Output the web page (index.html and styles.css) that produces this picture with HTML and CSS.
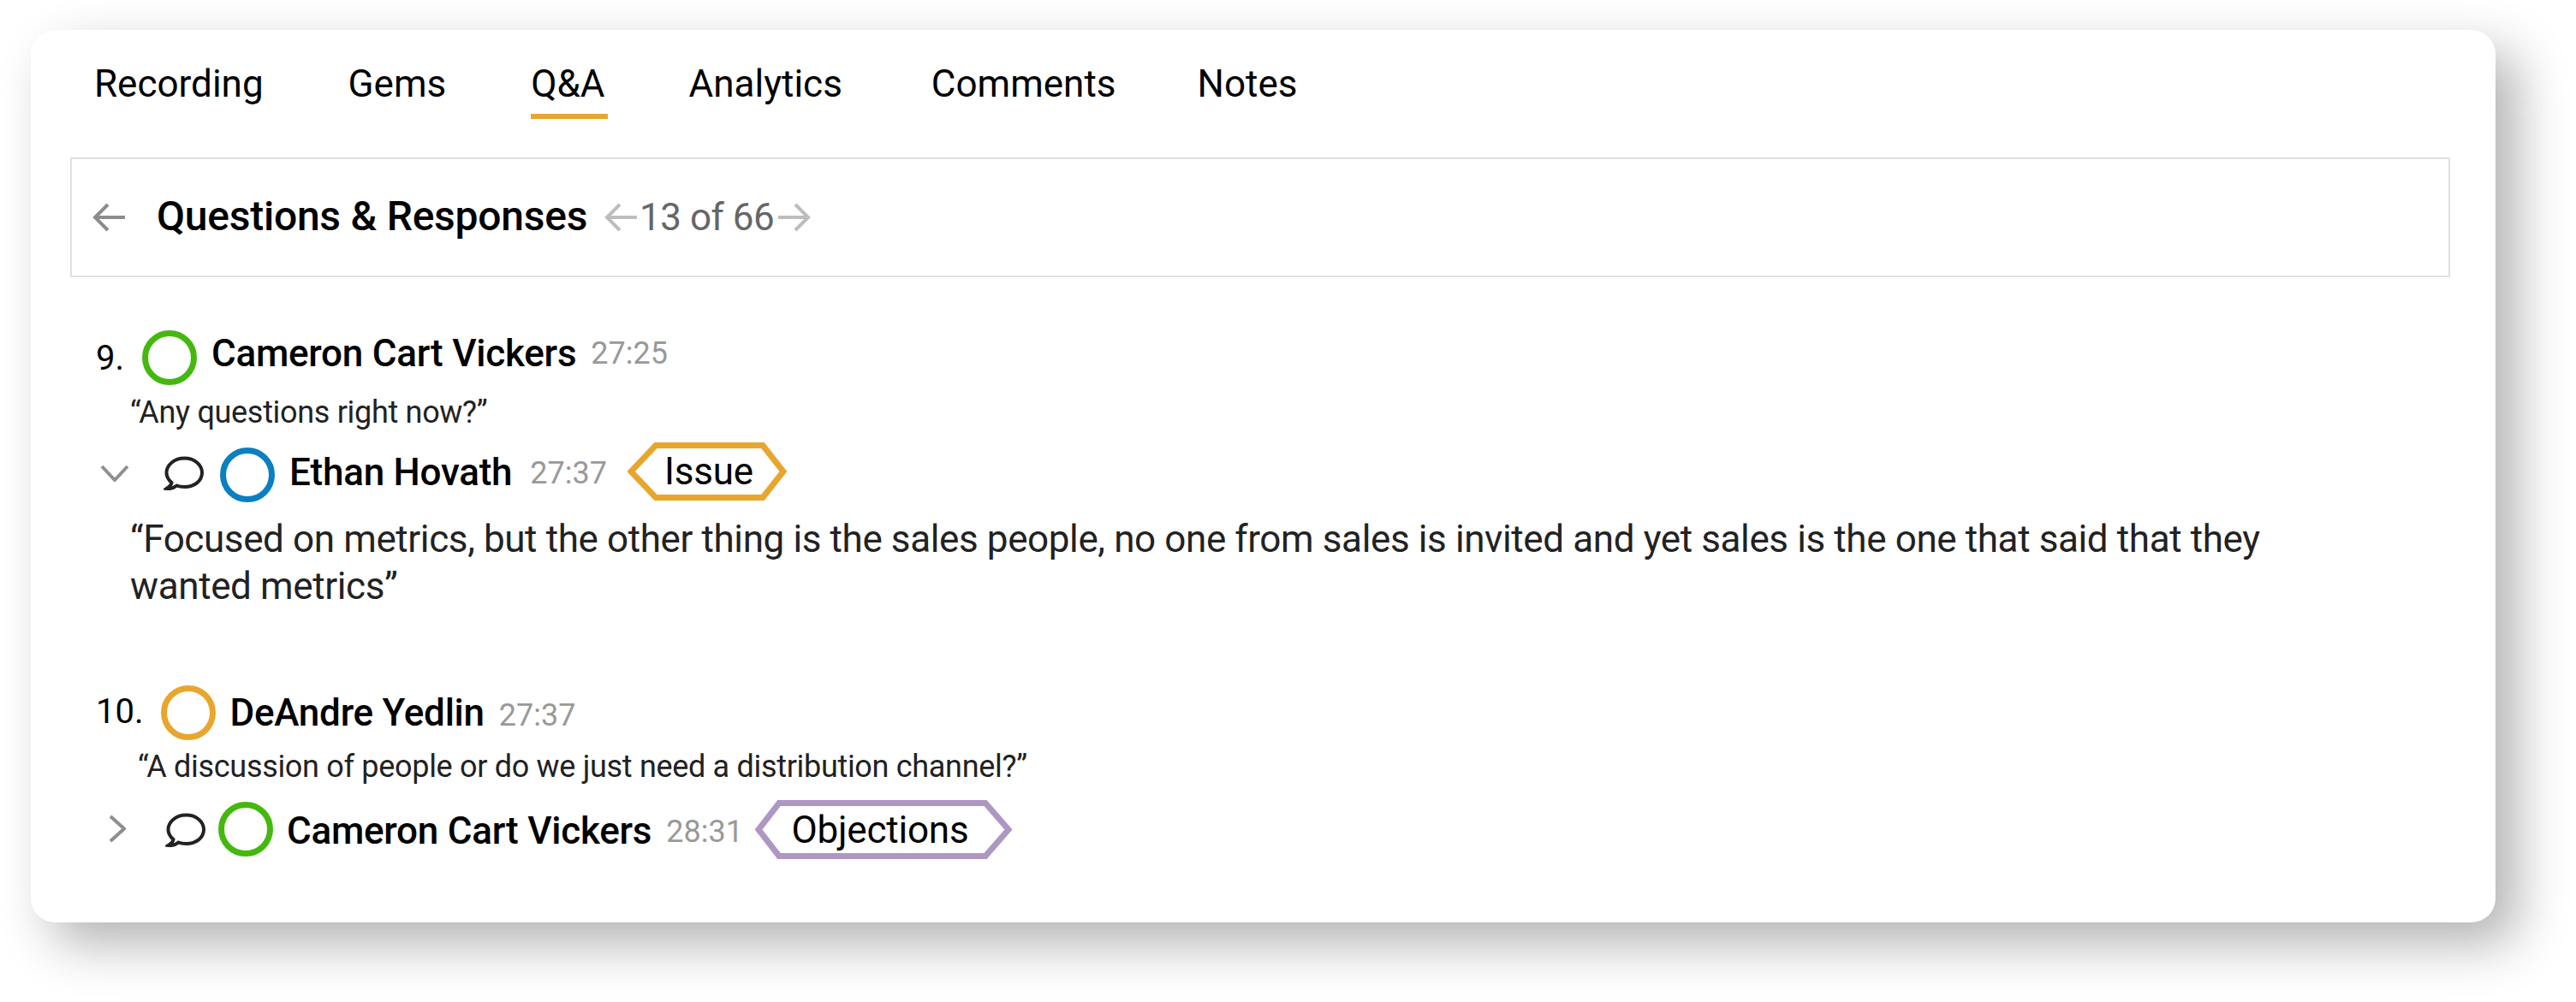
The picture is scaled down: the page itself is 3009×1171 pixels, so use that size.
FILE: index.html
```html
<!DOCTYPE html>
<html lang="en">
<head>
<meta charset="utf-8">
<title>Questions &amp; Responses</title>
<link rel="stylesheet" href="styles.css">
</head>
<body>
<main class="card">
  <nav class="tabs">
    <span class="tab tab-recording">Recording</span>
    <span class="tab tab-gems">Gems</span>
    <span class="tab tab-qa active">Q&amp;A</span>
    <span class="tab tab-analytics">Analytics</span>
    <span class="tab tab-comments">Comments</span>
    <span class="tab">Notes</span>
  </nav>
  <header class="panel">
    <svg class="arrow arrow-back" viewBox="0 0 40 34"><path d="M38 17H3M18 2 3 17l15 15"/></svg>
    <h1 class="title">Questions &amp; Responses</h1>
    <svg class="arrow arrow-pager" viewBox="0 0 40 34"><path d="M38 17H3M18 2 3 17l15 15"/></svg>
    <span class="count">13 of 66</span>
    <svg class="arrow arrow-pager" viewBox="0 0 40 34"><path d="M2 17h35M22 2l15 15-15 15"/></svg>
  </header>

  <section class="row q-one">
    <span class="num">9.</span>
    <span class="avatar green"></span>
    <span class="name">Cameron Cart Vickers</span>
    <span class="time">27:25</span>
  </section>
  <p class="quote quote-one">“Any questions right now?”</p>
  <section class="row reply reply-open">
    <span class="toggle toggle-open"><svg class="chev-down" viewBox="0 0 34 20"><path d="M2 2l15 16L32 2"/></svg></span>
    <svg class="bubble" viewBox="0 0 47 40"><path d="M9.500 31C6 28 3.500 24 3.500 19.500 3.500 10 13 2.500 24.500 2.500S45 10 45 19.500 36 36 24.500 36c-3.500 0-6.500-.5-9-1.500C12.500 37 8 38.500 3.500 38 6.500 36 9.500 34 9.500 31Z"/></svg>
    <span class="avatar blue"></span>
    <span class="name">Ethan Hovath</span>
    <span class="time">27:37</span>
    <span class="tag tag-issue">
      <svg class="tag-shape" viewBox="0 0 186 68"><polygon class="stroke-orange" points="33,3.500 158,3.500 182,34 158,64.500 33,64.500 4,34"/></svg>
      <span class="tag-text">Issue</span>
    </span>
  </section>
  <p class="answer">“Focused on metrics, but the other thing is the sales people, no one from sales is invited and yet sales is the one that said that they wanted metrics”</p>

  <section class="row q-two">
    <span class="num">10.</span>
    <span class="avatar orange"></span>
    <span class="name">DeAndre Yedlin</span>
    <span class="time">27:37</span>
  </section>
  <p class="quote quote-two">“A discussion of people or do we just need a distribution channel?”</p>
  <section class="row reply reply-closed">
    <span class="toggle toggle-closed"><svg class="chev-right" viewBox="0 0 20 33"><path d="M2 2l16 14.500L2 31"/></svg></span>
    <svg class="bubble" viewBox="0 0 47 40"><path d="M9.500 31C6 28 3.500 24 3.500 19.500 3.500 10 13 2.500 24.500 2.500S45 10 45 19.500 36 36 24.500 36c-3.500 0-6.500-.5-9-1.500C12.500 37 8 38.500 3.500 38 6.500 36 9.500 34 9.500 31Z"/></svg>
    <span class="avatar green"></span>
    <span class="name">Cameron Cart Vickers</span>
    <span class="time">28:31</span>
    <span class="tag tag-objections">
      <svg class="tag-shape" viewBox="0 0 300 69"><polygon class="stroke-purple" points="28,3.500 269,3.500 296,34.500 269,65.500 28,65.500 4,34.500"/></svg>
      <span class="tag-text">Objections</span>
    </span>
  </section>
</main>
</body>
</html>
```
FILE: styles.css
```css
* { box-sizing: border-box; }
html, body { margin: 0; padding: 0; background: #fff; }
body { width: 3009px; height: 1171px; overflow: hidden; font-family: Roboto, "Liberation Sans", sans-serif; color: #000; }

.card {
  width: 2879px;
  height: 1043px;
  margin: 35px 0 0 36px;
  padding: 0 53px 0 46px;
  background: #fff;
  border-radius: 28px;
  box-shadow: 25px 25px 60px rgba(0, 0, 0, .3);
}

.tabs { display: flex; padding: 37px 0 0 28px; height: 104px; }
.tab { font-size: 44px; line-height: 52px; height: 67px; }
.tab-recording { margin-right: 99px; }
.tab-gems { margin-right: 99px; }
.tab-qa { margin-right: 95px; padding-right: 3px; }
.tab-analytics { margin-right: 104px; }
.tab-comments { margin-right: 95px; }
.tab.active { border-bottom: 6px solid #e8a62e; }

.panel {
  display: flex;
  align-items: center;
  height: 140px;
  margin-top: 45px;
  padding-left: 24px;
  border: 2px solid #e0e0e0;
}
.arrow { fill: none; stroke-width: 4px; flex: none; width: 40px; height: 34px; }
.arrow path { fill: none; }
.arrow-back path { stroke: #8c8c8c; }
.arrow-pager path { stroke: #bdbdbd; }
.arrow-back { margin-right: 35px; }
.title { margin: -2px 20px 0 0; font-size: 48px; font-weight: 500; line-height: 56px; letter-spacing: -.25px; }
.count { font-size: 44px; line-height: 52px; color: #666; margin: 0 3px 0 1px; letter-spacing: -.5px; }

.row { display: flex; align-items: flex-start; }
.q-one { margin: 62px 0 0 30px; gap: 17px; height: 64px; }
.q-two { margin: 88px 0 0 30px; gap: 17px; height: 64px; }
.num { font-size: 40px; line-height: 47px; margin-top: 9px; margin-right: 4px; }
.q-two .num { margin-top: 7px; margin-right: 3px; }
.avatar { flex: none; width: 64px; height: 64px; border-radius: 50%; border: 7px solid; }
.green { border-color: #44b80e; }
.blue { border-color: #0a7fc2; }
.orange { border-color: #e8a62e; }
.name { font-size: 44px; font-weight: 500; line-height: 52px; margin-top: 1px; letter-spacing: -.25px; }
.time { font-size: 36px; line-height: 42px; color: #999; margin-top: 6px; }
.q-two .name { margin-top: 6px; }
.q-two .time { margin-top: 14px; }

.quote { margin: 0; font-size: 36px; line-height: 42px; color: #222; letter-spacing: -.31px; }
.quote-one { margin: 11px 0 0 70px; }
.quote-two { margin: 10px 0 0 79px; }

.toggle { display: block; flex: none; }
.toggle-open { width: 74px; margin-top: 26px; }
.toggle-closed { width: 66px; margin-top: 17px; }
.chev-down { display: block; width: 34px; height: 20px; fill: none; }
.chev-right { display: block; width: 20px; height: 33px; fill: none; }
.chev-down path, .chev-right path { fill: none; stroke: #8f8f8f; stroke-width: 4px; }
.bubble { flex: none; width: 47px; height: 40px; }
.bubble path { fill: none; stroke: #222; stroke-width: 4px; }

.reply { height: 69px; }
.reply-open { margin: 14px 0 0 35px; }
.reply-open .bubble { margin-top: 16px; margin-right: 19px; }
.reply-open .avatar { margin-top: 6px; margin-right: 17px; }
.reply-open .name { margin-top: 9px; margin-right: 21px; }
.reply-open .time { margin-top: 15px; margin-right: 24px; }
.reply-closed { margin: 18px 0 0 45px; }
.reply-closed .bubble { margin-top: 15px; margin-right: 15px; }
.reply-closed .avatar { margin-top: 2px; margin-right: 16px; }
.reply-closed .name { margin-top: 10px; margin-right: 17px; }
.reply-closed .time { margin-top: 16px; margin-right: 14px; }

.tag { position: relative; display: flex; align-items: center; justify-content: center; flex: none; }
.tag-issue { width: 186px; height: 68px; padding-left: 4px; }
.tag-objections { width: 300px; height: 69px; padding-right: 8px; }
.tag-shape { position: absolute; inset: 0; width: 100%; height: 100%; }
.stroke-orange { fill: #fff; stroke: #e8a62e; stroke-width: 7px; }
.stroke-purple { fill: #fff; stroke: #ae97c2; stroke-width: 7px; }
.tag-text { position: relative; font-size: 44px; line-height: 52px; letter-spacing: -.2px; }

.answer {
  max-width: 2560px;
  margin: 17px 0 0 70px;
  font-size: 44px;
  line-height: 55px;
  color: #222;
  letter-spacing: -.39px;
}
```
